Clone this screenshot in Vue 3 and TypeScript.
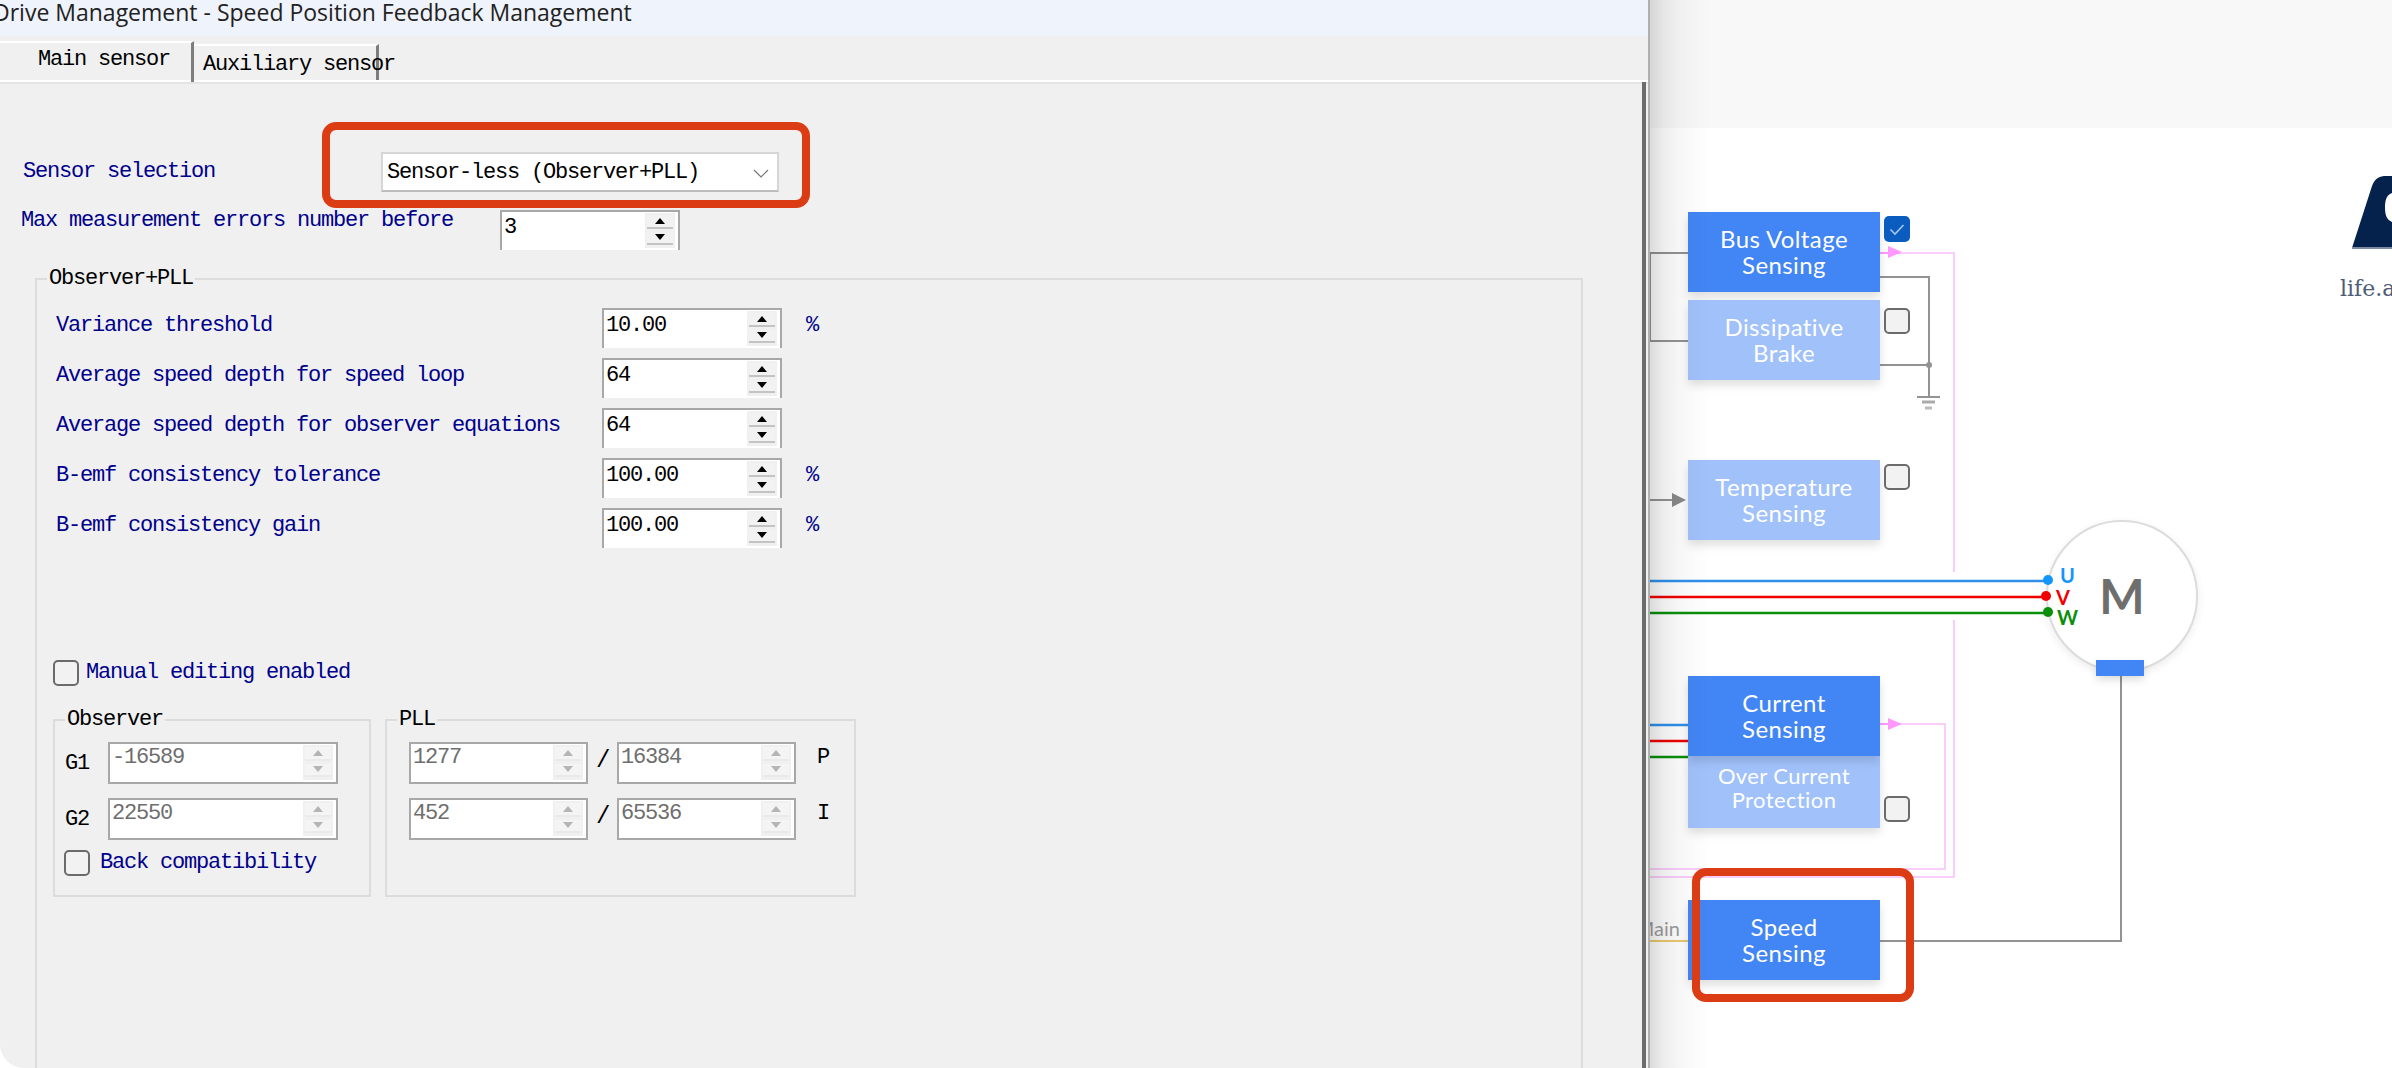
<template>
  <div class="screen">
    <section class="dialog">
      <header class="titlebar">Drive Management - Speed Position Feedback Management</header>

      <nav class="tabs">
        <span class="tab tab--active">Main sensor</span>
        <span class="tab">Auxiliary sensor</span>
      </nav>

      <div class="page">
        <div class="sensor-row">
          <label class="label">Sensor selection</label>
          <div class="combo">
            <span class="value">Sensor-less (Observer+PLL)</span>
            <svg class="combo__arrow" viewBox="0 0 16 9" width="16" height="9" aria-hidden="true">
              <path d="M1 1l7 7 7-7" fill="none" stroke="#777" stroke-width="1.2" />
            </svg>
          </div>
        </div>

        <div class="max-row">
          <label class="label">Max measurement errors number before</label>
          <div class="spin spin--open">
            <span class="spin__text value">3</span>
            <span class="spin__btns">
              <i class="btn"><b class="tri tri--up" /></i>
              <i class="btn"><b class="tri tri--down" /></i>
            </span>
          </div>
        </div>

        <div class="group">
          <span class="legend">Observer+PLL</span>

          <div v-for="row in params" :key="row.label" class="param">
            <label class="label param__label">{{ row.label }}</label>
            <div class="spin spin--open">
              <span class="spin__text value">{{ row.value }}</span>
              <span class="spin__btns">
                <i class="btn"><b class="tri tri--up" /></i>
                <i class="btn"><b class="tri tri--down" /></i>
              </span>
            </div>
            <span v-if="row.unit" class="label param__unit">{{ row.unit }}</span>
          </div>

          <div class="check-row check-row--manual">
            <span class="check" />
            <label class="label">Manual editing enabled</label>
          </div>

          <div class="subgroups">
            <div class="subgroup subgroup--observer">
              <span class="legend">Observer</span>
              <div v-for="g in gains" :key="g.name" class="gain">
                <span class="value gain__name">{{ g.name }}</span>
                <div class="spin spin--off spin--wide">
                  <span class="spin__text value">{{ g.value }}</span>
                  <span class="spin__btns">
                    <i class="btn"><b class="tri tri--up" /></i>
                    <i class="btn"><b class="tri tri--down" /></i>
                  </span>
                </div>
              </div>
              <div class="check-row check-row--back">
                <span class="check" />
                <label class="label">Back compatibility</label>
              </div>
            </div>

            <div class="subgroup subgroup--pll">
              <span class="legend">PLL</span>
              <div v-for="p in pll" :key="p.name" class="gain">
                <div class="spin spin--off spin--pll">
                  <span class="spin__text value">{{ p.num }}</span>
                  <span class="spin__btns">
                    <i class="btn"><b class="tri tri--up" /></i>
                    <i class="btn"><b class="tri tri--down" /></i>
                  </span>
                </div>
                <span class="value slash">/</span>
                <div class="spin spin--off spin--pll">
                  <span class="spin__text value">{{ p.den }}</span>
                  <span class="spin__btns">
                    <i class="btn"><b class="tri tri--up" /></i>
                    <i class="btn"><b class="tri tri--down" /></i>
                  </span>
                </div>
                <span class="value pll__name">{{ p.name }}</span>
              </div>
            </div>
          </div>
        </div>
      </div>
    </section>

    <section class="canvas">
      <div class="canvas__band" />

      <svg class="wires" viewBox="1650 0 742 1068" aria-hidden="true">
        <g fill="none" stroke="#939393" stroke-width="2">
          <path d="M1650 253V341M1650 253H1688M1650 341H1688" />
          <path d="M1880 277H1929V396M1880 365H1929" />
          <path d="M1650 500H1676" />
          <path d="M2121 676V941H1880" />
          <path d="M1917 397H1940" />
          <path d="M1922 402H1935" stroke-width="3" stroke="#aaa" />
          <path d="M1925 408H1932" stroke-width="3" stroke="#bbb" />
        </g>
        <circle cx="1929" cy="365" r="3" fill="#939393" />
        <polygon points="1672,493 1686,500 1672,507" fill="#8a8a8a" />

        <g fill="none" stroke="#fbcdfb" stroke-width="2">
          <path d="M1880 253H1954V572M1954 620V877H1650" />
          <path d="M1880 724H1945V869H1650" />
        </g>
        <path d="M1880 253H1900M1880 724H1900" stroke="#ff99ff" stroke-width="2" />
        <polygon points="1888,246 1902,252 1888,258" fill="#ff99ff" />
        <polygon points="1888,718 1902,724 1888,730" fill="#ff99ff" />

        <g stroke-width="2.4">
          <path d="M1650 581H2048M1650 725H1688" stroke="#2f90ec" />
          <path d="M1650 597H2046M1650 741H1688" stroke="#f00000" />
          <path d="M1650 613H2048M1650 757H1688" stroke="#0a8f0a" />
        </g>
        <path d="M1650 941H1688" stroke="#ecca6e" stroke-width="2" />
      </svg>

      <div class="motor">
        <span class="motor__m">M</span>
      </div>
      <svg class="wires" viewBox="1650 0 742 1068" aria-hidden="true">
        <circle cx="2048" cy="580" r="5" fill="#1296fa" />
        <circle cx="2046" cy="596" r="5" fill="#f00000" />
        <circle cx="2048" cy="612" r="5" fill="#0a8f0a" />
      </svg>
      <span class="phase phase--u">U</span>
      <span class="phase phase--v">V</span>
      <span class="phase phase--w">W</span>
      <div class="motor__port" />

      <div v-for="n in nodes" :key="n.key" class="node" :class="n.cls" :style="nodeStyle(n)">
        <span v-for="line in n.lines" :key="line">{{ line }}</span>
      </div>

      <span
        v-for="c in checks"
        :key="c.y"
        class="check check--float"
        :class="{ 'check--on': c.on }"
        :style="{ top: c.y + 'px' }"
      >
        <svg v-if="c.on" viewBox="0 0 26 26" width="26" height="26" aria-hidden="true">
          <path d="M6.5 13.5l4.5 4.5 8.5-9" fill="none" stroke="#a9c6ec" stroke-width="1.6" />
        </svg>
      </span>

      <span class="main-tag">Main</span>

      <div class="logo">
        <svg viewBox="0 0 40 74" width="40" height="74" aria-hidden="true">
          <path
            d="M0 72L20 10C23 2 28 0 34 0H40V17C34 19 33 25 33 32S35 44 40 46V72Z"
            fill="#04224c"
          />
          <path d="M0 72H40" stroke="#7c8ba3" stroke-width="2" />
        </svg>
        <span class="logo__text">life.augmented</span>
      </div>

      <div class="window-shadow" />
    </section>

    <div class="mark mark--combo" />
    <div class="mark mark--speed" />
  </div>
</template>

<script setup lang="ts">
interface DiagramNode {
  key: string
  cls: string
  x: number
  y: number
  w: number
  h: number
  lines: string[]
}

const CANVAS_X = 1650

const params = [
  { label: 'Variance threshold', value: '10.00', unit: '%' },
  { label: 'Average speed depth for speed loop', value: '64', unit: '' },
  { label: 'Average speed depth for observer equations', value: '64', unit: '' },
  { label: 'B-emf consistency tolerance', value: '100.00', unit: '%' },
  { label: 'B-emf consistency gain', value: '100.00', unit: '%' },
]

const gains = [
  { name: 'G1', value: '-16589' },
  { name: 'G2', value: '22550' },
]

const pll = [
  { name: 'P', num: '1277', den: '16384' },
  { name: 'I', num: '452', den: '65536' },
]

const nodes: DiagramNode[] = [
  { key: 'bus', cls: 'node--on', x: 1688, y: 212, w: 192, h: 80, lines: ['Bus Voltage', 'Sensing'] },
  { key: 'brake', cls: 'node--off', x: 1688, y: 300, w: 192, h: 80, lines: ['Dissipative', 'Brake'] },
  { key: 'temp', cls: 'node--off', x: 1688, y: 460, w: 192, h: 80, lines: ['Temperature', 'Sensing'] },
  { key: 'ocp', cls: 'node--off node--small', x: 1688, y: 756, w: 192, h: 72, lines: ['Over Current', 'Protection'] },
  { key: 'current', cls: 'node--on', x: 1688, y: 676, w: 192, h: 80, lines: ['Current', 'Sensing'] },
  { key: 'speed', cls: 'node--on', x: 1688, y: 900, w: 192, h: 80, lines: ['Speed', 'Sensing'] },
]

const checks = [
  { y: 216, on: true },
  { y: 308, on: false },
  { y: 464, on: false },
  { y: 796, on: false },
]

function nodeStyle(n: DiagramNode) {
  return {
    left: n.x - CANVAS_X + 'px',
    top: n.y + 'px',
    width: n.w + 'px',
    height: n.h + 'px',
  }
}
</script>

<style>
html,
body {
  margin: 0;
  background: #fff;
  overflow: hidden;
}
</style>

<style scoped>
.screen {
  position: relative;
  display: flex;
  width: 2392px;
  height: 1068px;
  overflow: hidden;
  background: #fff;
}

/* ── dialog ── */
.dialog {
  position: relative;
  z-index: 2;
  flex: 0 0 1650px;
  box-sizing: border-box;
  height: 1068px;
  display: flex;
  flex-direction: column;
  overflow: hidden;
  background: #f0f0f0;
  border-right: 2px solid #b0b0b0;
  border-bottom-left-radius: 24px;
}

.titlebar {
  height: 36px;
  flex: none;
  margin-left: -7px;
  background: #eff3fb;
  color: #222;
  font: 23px/24px 'Open Sans', sans-serif;
  white-space: nowrap;
}

.tabs {
  height: 46px;
  flex: none;
  box-sizing: border-box;
  display: flex;
  align-items: flex-end;
  border-bottom: 2px solid #fff;
  box-shadow: 0 2px 0 #e4e4e4;
  letter-spacing: -1.2px;
}

.tab {
  position: relative;
  box-sizing: border-box;
  height: 36px;
  width: 185px;
  padding: 6px 0 0 9px;
  color: #000;
  font: 22px/26px 'Liberation Mono', monospace;
  white-space: nowrap;
  border-top: 2px solid #fff;
  border-right: 3px solid #7d7d7d;
}

.tab--active {
  height: 41px;
  width: 194px;
  padding: 4px 0 0 38px;
  margin-bottom: -2px;
}

.page {
  flex: 1;
  min-height: 0;
  box-sizing: border-box;
  border-right: 4px solid #6c6c6c;
  margin-right: 2px;
  padding-top: 70px;
  font-family: 'Liberation Mono', monospace;
  letter-spacing: -1.2px;
}

.label {
  color: #00008c;
  font-size: 22px;
  line-height: 24px;
  white-space: nowrap;
}

.value {
  color: #000;
  font-size: 22px;
  line-height: 32px;
  white-space: nowrap;
}

.sensor-row {
  display: flex;
  align-items: center;
  height: 40px;
  padding-left: 23px;
}

.combo {
  box-sizing: border-box;
  display: flex;
  align-items: center;
  justify-content: space-between;
  width: 398px;
  height: 40px;
  margin-left: 166px;
  padding: 2px 8px 0 4px;
  background: #fff;
  border: 2px solid #d6d6d6;
  border-bottom-color: #bcbcbc;
}

.combo__arrow {
  flex: none;
}

.max-row {
  display: flex;
  margin-top: 18px;
  padding-left: 21px;
}

.max-row .label {
  width: 479px;
  height: 20px;
  line-height: 21px;
}

/* ── spin boxes ── */
.spin {
  box-sizing: border-box;
  display: flex;
  flex: none;
  width: 180px;
  height: 40px;
  background: #fff;
  border: 2px solid #a8a8a8;
}

.spin--open {
  border-bottom: 0;
}

.spin--wide {
  width: 230px;
  height: 42px;
}

.spin--pll {
  width: 179px;
  height: 42px;
}

.spin__text {
  flex: 1;
  padding-left: 2px;
}

.spin__btns {
  flex: none;
  box-sizing: border-box;
  width: 30px;
  margin: 1px 3px 2px 0;
  padding: 2px 2px 3px;
  display: flex;
  flex-direction: column;
  gap: 3px;
  background: #f0f0f0;
}

.btn {
  flex: 1;
  display: flex;
  align-items: center;
  justify-content: center;
  background: #f2f2f2;
  border-bottom: 2px solid #c4c4c4;
}

.tri {
  width: 0;
  height: 0;
  border-left: 5px solid transparent;
  border-right: 5px solid transparent;
}

.tri--up {
  border-bottom: 6px solid #000;
}

.tri--down {
  border-top: 6px solid #000;
}

.spin--off .spin__text {
  color: #6e6e6e;
  line-height: 28px;
}

.spin--off .btn {
  background: #f4f4f4;
  border-bottom-color: #eaeaea;
}

.spin--off .tri--up {
  border-bottom-color: #b4b4b4;
}

.spin--off .tri--down {
  border-top-color: #b4b4b4;
}

/* ── groups ── */
.group {
  position: relative;
  box-sizing: border-box;
  width: 1548px;
  height: 900px;
  margin: 28px 0 0 35px;
  padding: 28px 0 0 19px;
  border: 2px solid #dcdcdc;
  border-bottom: 0;
}

.legend {
  position: absolute;
  top: -13px;
  left: 10px;
  padding: 0 2px;
  background: #f0f0f0;
  color: #000;
  font-size: 22px;
  line-height: 24px;
}

.param {
  display: flex;
  align-items: center;
  height: 40px;
  margin-bottom: 10px;
}

.param__label {
  width: 546px;
  margin-bottom: 4px;
}

.param__unit {
  margin: 0 0 4px 24px;
}

.check {
  display: block;
  flex: none;
  box-sizing: border-box;
  width: 26px;
  height: 26px;
  background: #f2f2f2;
  border: 2px solid #6b6b6b;
  border-radius: 5px;
}

.check-row {
  display: flex;
  align-items: center;
}

.check-row--manual {
  gap: 7px;
  margin: 112px 0 0 -3px;
}

.check-row--back {
  gap: 10px;
  margin: -4px 0 0 -1px;
}

.subgroups {
  display: flex;
  gap: 14px;
  margin: 33px 0 0 -3px;
}

.subgroup {
  position: relative;
  box-sizing: border-box;
  display: flex;
  flex-direction: column;
  gap: 14px;
  height: 178px;
  padding-top: 21px;
  border: 2px solid #dcdcdc;
}

.subgroup--observer {
  width: 318px;
  padding-left: 10px;
}

.subgroup--pll {
  width: 471px;
  padding-left: 22px;
}

.gain {
  display: flex;
  align-items: flex-start;
  height: 42px;
}

.gain__name {
  width: 43px;
  padding-top: 6px;
}

.slash {
  width: 29px;
  padding-top: 3px;
  font-size: 24px;
  text-align: center;
}

.pll__name {
  margin-left: 21px;
}

/* ── diagram ── */
.canvas {
  position: relative;
  flex: 1;
  height: 1068px;
  overflow: hidden;
  background: #fff;
}

.canvas__band {
  height: 128px;
  background: #f8f8f8;
}

.wires {
  position: absolute;
  top: 0;
  left: 0;
  width: 742px;
  height: 1068px;
}

.window-shadow {
  position: absolute;
  top: 0;
  left: 0;
  width: 70px;
  height: 1068px;
  pointer-events: none;
  background: linear-gradient(
    to right,
    rgba(0, 0, 0, 0.14) 0,
    rgba(0, 0, 0, 0.07) 14px,
    rgba(0, 0, 0, 0.03) 30px,
    rgba(0, 0, 0, 0) 60px
  );
}

.node {
  position: absolute;
  box-sizing: border-box;
  display: flex;
  flex-direction: column;
  align-items: center;
  justify-content: center;
  color: #fff;
  font: 24px/26px Lato, sans-serif;
  letter-spacing: 0.4px;
  box-shadow: 0 5px 9px rgba(0, 0, 0, 0.13);
}

.node--on {
  background: #4285f4;
}

.node--off {
  background: #a0c1fa;
}

.node--small {
  padding-bottom: 8px;
  font-size: 22px;
  line-height: 24px;
}

.check--float {
  position: absolute;
  left: 234px;
}

.check--on {
  background: #0a5cbf;
  border: 0;
}

.main-tag {
  position: absolute;
  top: 916px;
  right: 712px;
  color: #9c9c9c;
  font: 20px/24px Lato, sans-serif;
}

.motor {
  position: absolute;
  left: 396px;
  top: 520px;
  box-sizing: border-box;
  width: 152px;
  height: 152px;
  display: flex;
  align-items: center;
  justify-content: center;
  background: #fff;
  border: 2px solid #dcdcdc;
  border-radius: 50%;
  box-shadow: 0 3px 8px rgba(0, 0, 0, 0.08);
}

.motor__m {
  margin-top: -1px;
  color: #6e6e6e;
  font: 700 48px/48px Lato, sans-serif;
}

.motor__port {
  position: absolute;
  left: 446px;
  top: 660px;
  width: 48px;
  height: 16px;
  background: #4285f4;
  box-shadow: 0 4px 8px rgba(0, 0, 0, 0.12);
}

.phase {
  position: absolute;
  font: 700 20px/18px Lato, sans-serif;
}

.phase--u {
  left: 410px;
  top: 566px;
  color: #1296fa;
}

.phase--v {
  left: 406px;
  top: 588px;
  color: #f00000;
}

.phase--w {
  left: 407px;
  top: 608px;
  color: #0a8f0a;
}

.logo {
  position: absolute;
  left: 702px;
  top: 176px;
  width: 40px;
}

.logo svg {
  display: block;
}

.logo__text {
  position: absolute;
  top: 98px;
  left: -12px;
  color: #4c5d78;
  font: 22px/30px 'DejaVu Serif', serif;
  white-space: nowrap;
}

/* ── annotation frames ── */
.mark {
  position: absolute;
  z-index: 3;
  box-sizing: border-box;
  border: 8px solid #dc3c14;
  border-radius: 14px;
}

.mark--combo {
  left: 322px;
  top: 122px;
  width: 488px;
  height: 86px;
}

.mark--speed {
  left: 1692px;
  top: 868px;
  width: 222px;
  height: 134px;
}
</style>
